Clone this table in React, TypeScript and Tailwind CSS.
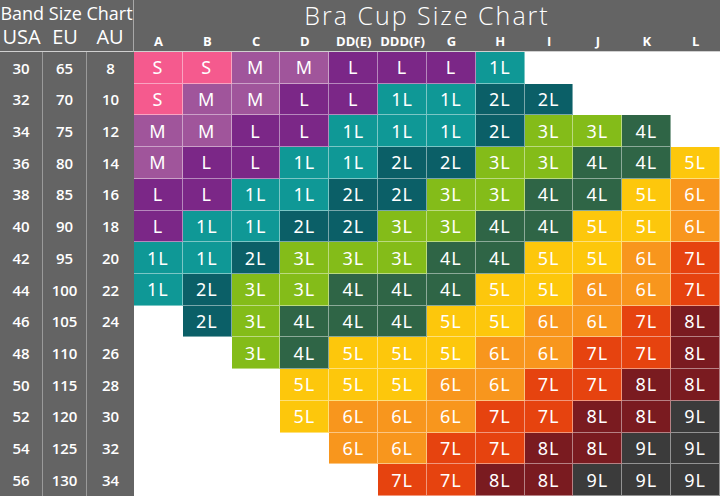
import React from "react";

const cups = ["A", "B", "C", "D", "DD(E)", "DDD(F)", "G", "H", "I", "J", "K", "L"];

const rows: [string, string, string, string[]][] = [
  ["30", "65", "8", ["S", "S", "M", "M", "L", "L", "L", "1L", "", "", "", ""]],
  ["32", "70", "10", ["S", "M", "M", "L", "L", "1L", "1L", "2L", "2L", "", "", ""]],
  ["34", "75", "12", ["M", "M", "L", "L", "1L", "1L", "1L", "2L", "3L", "3L", "4L", ""]],
  ["36", "80", "14", ["M", "L", "L", "1L", "1L", "2L", "2L", "3L", "3L", "4L", "4L", "5L"]],
  ["38", "85", "16", ["L", "L", "1L", "1L", "2L", "2L", "3L", "3L", "4L", "4L", "5L", "6L"]],
  ["40", "90", "18", ["L", "1L", "1L", "2L", "2L", "3L", "3L", "4L", "4L", "5L", "5L", "6L"]],
  ["42", "95", "20", ["1L", "1L", "2L", "3L", "3L", "3L", "4L", "4L", "5L", "5L", "6L", "7L"]],
  ["44", "100", "22", ["1L", "2L", "3L", "3L", "4L", "4L", "4L", "5L", "5L", "6L", "6L", "7L"]],
  ["46", "105", "24", ["", "2L", "3L", "4L", "4L", "4L", "5L", "5L", "6L", "6L", "7L", "8L"]],
  ["48", "110", "26", ["", "", "3L", "4L", "5L", "5L", "5L", "6L", "6L", "7L", "7L", "8L"]],
  ["50", "115", "28", ["", "", "", "5L", "5L", "5L", "6L", "6L", "7L", "7L", "8L", "8L"]],
  ["52", "120", "30", ["", "", "", "5L", "6L", "6L", "6L", "7L", "7L", "8L", "8L", "9L"]],
  ["54", "125", "32", ["", "", "", "", "6L", "6L", "7L", "7L", "8L", "8L", "9L", "9L"]],
  ["56", "130", "34", ["", "", "", "", "", "7L", "7L", "8L", "8L", "9L", "9L", "9L"]],
];

const colors: Record<string, string> = {
  S: "bg-[#f55a8e]",
  M: "bg-[#a0559b]",
  L: "bg-[#7b2787]",
  "1L": "bg-[#0f9896]",
  "2L": "bg-[#0b5f67]",
  "3L": "bg-[#84bc19]",
  "4L": "bg-[#2f6546]",
  "5L": "bg-[#fdc70c]",
  "6L": "bg-[#f8961d]",
  "7L": "bg-[#e6430f]",
  "8L": "bg-[#7a1b20]",
  "9L": "bg-[#3b3b3b]",
};

export default function App() {
  const sans = { fontFamily: '"Open Sans", "Noto Sans", sans-serif' };
  return (
    <div
      className="w-[720px] h-[496px] bg-white grid grid-cols-[43px_44px_47px_repeat(12,1fr)] grid-rows-[52px_repeat(14,1fr)] overflow-hidden"
      style={sans}
    >
      {/* Band header */}
      <div className="col-span-3 bg-[#646464] text-white flex flex-col border-r border-b border-[#d0d0d0] border-r-[#a8a8a8]">
        <div className="h-[24px] flex items-center justify-center text-[18px] leading-[24px] whitespace-nowrap pt-[1px]">
          Band Size Chart
        </div>
        <div className="grid grid-cols-[43px_44px_46px] text-[20px] leading-[22px] pt-[2px]">
          <div className="text-center">USA</div>
          <div className="text-center">EU</div>
          <div className="text-center">AU</div>
        </div>
      </div>
      {/* Cup header */}
      <div className="col-span-12 bg-[#646464] text-white flex flex-col border-b border-[#d0d0d0]">
        <div className="h-[30px] flex items-center justify-center text-[25px] leading-[30px] font-light tracking-[2px] whitespace-nowrap">
          Bra Cup Size Chart
        </div>
        <div className="grid grid-cols-[repeat(12,1fr)] text-[13px] font-bold leading-[16px] pt-[3px]">
          {cups.map((c) => (
            <div key={c} className="text-center whitespace-nowrap">
              {c}
            </div>
          ))}
        </div>
      </div>
      {/* Body */}
      {rows.map(([us, eu, au, cells]) => (
        <React.Fragment key={us}>
          <div className="bg-[#646464] text-white text-[15px] font-semibold flex items-center justify-center border-r border-[#9a9a9a]">{us}</div>
          <div className="bg-[#646464] text-white text-[15px] font-semibold flex items-center justify-center border-r border-[#9a9a9a]">{eu}</div>
          <div className="bg-[#646464] text-white text-[15px] font-semibold flex items-center justify-center">{au}</div>
          {cells.map((v, ci) =>
            v ? (
              <div
                key={ci}
                className={`${colors[v]} text-white text-[18px] leading-none flex items-center justify-center tracking-[1px] border-r border-b border-white/45`}
                style={{ fontFamily: '"Noto Sans", "Open Sans", sans-serif' }}
              >
                {v}
              </div>
            ) : (
              <div key={ci} className="bg-white" />
            )
          )}
        </React.Fragment>
      ))}
    </div>
  );
}
